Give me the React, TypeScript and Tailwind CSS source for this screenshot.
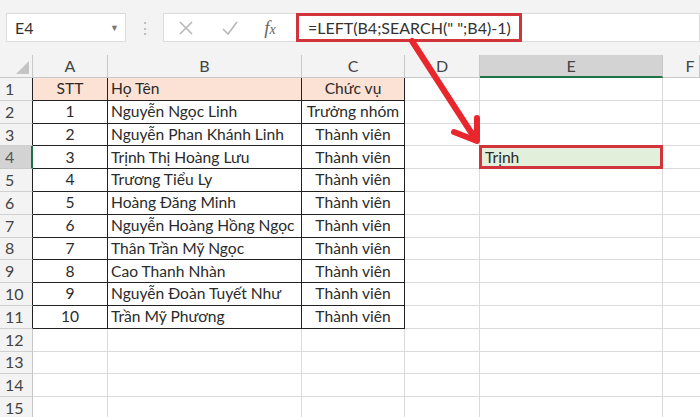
import React from "react";

const rows: [string, string, string][] = [
  ["STT", "Họ Tên", "Chức vụ"],
  ["1", "Nguyễn Ngọc Linh", "Trưởng nhóm"],
  ["2", "Nguyễn Phan Khánh Linh", "Thành viên"],
  ["3", "Trịnh Thị Hoàng Lưu", "Thành viên"],
  ["4", "Trương Tiểu Ly", "Thành viên"],
  ["5", "Hoàng Đăng Minh", "Thành viên"],
  ["6", "Nguyễn Hoàng Hồng Ngọc", "Thành viên"],
  ["7", "Thân Trần Mỹ Ngọc", "Thành viên"],
  ["8", "Cao Thanh Nhàn", "Thành viên"],
  ["9", "Nguyễn Đoàn Tuyết Như", "Thành viên"],
  ["10", "Trần Mỹ Phương", "Thành viên"],
];

const font = { fontFamily: "Lato, 'Noto Sans', sans-serif" };

export default function App() {
  const totalRows = 15;
  return (
    <div className="relative w-[700px] h-[417px] overflow-hidden bg-white text-[#2b2b2b]" style={font}>
      {/* toolbar */}
      <div className="h-[55px] bg-[#f3f3f3] pt-[13px] flex items-start">
        <div className="ml-[6px] w-[120px] h-[29px] bg-white border border-[#dcdcdc] flex items-center pl-[8px] pr-[6px] text-[16px] text-[#333]">
          <span className="flex-1">E4</span>
          <span className="text-[9px] text-[#777]">▼</span>
        </div>
        <div className="w-[37px] h-[29px] flex items-center justify-center text-[#b5b5b5] text-[16px]">⋮</div>
        <div className="flex-1 h-[29px] bg-white border border-[#dcdcdc] flex items-center">
          <div className="w-[44px] flex justify-center">
            <svg width="16" height="16" viewBox="0 0 16 16"><path d="M2 2 L14 14 M14 2 L2 14" stroke="#b8b8b8" strokeWidth="1.6" /></svg>
          </div>
          <div className="w-[44px] flex justify-center">
            <svg width="18" height="16" viewBox="0 0 18 16"><path d="M2 9 L7 14 L16 2" stroke="#b8b8b8" strokeWidth="1.6" fill="none" /></svg>
          </div>
          <div className="w-[36px] flex justify-center items-baseline italic text-[#666]" style={{ fontFamily: "'Liberation Serif', serif" }}>
            <span className="text-[19px] leading-none">f</span>
            <span className="text-[14px] leading-none">x</span>
          </div>
          <div className="ml-[8px] h-[29px] w-[226px] border-[3px] border-[#d2343b] flex items-center pl-[9px] text-[16px] text-[#333] whitespace-nowrap">
            =LEFT(B4;SEARCH(" ";B4)-1)
          </div>
        </div>
      </div>

      {/* grid */}
      <div className="grid grid-cols-[33px_75px_194px_103px_75px_183px_1fr]">
        {/* header row */}
        <div className="h-[23px] bg-[#f3f3f3] border-r border-b border-[#c8c8c8] relative">
          <svg className="absolute right-[3px] bottom-[3px]" width="13" height="13" viewBox="0 0 13 13"><polygon points="13,0 13,13 0,13" fill="#c4c4c4" /></svg>
        </div>
        {["A", "B", "C", "D", "E", "F"].map((c) => (
          <div
            key={c}
            className={
              c === "E"
                ? "h-[23px] bg-[#d3d3d3] border-r border-b-2 border-r-[#c8c8c8] border-b-[#217346] flex items-center justify-center text-[16px] text-[#444]"
                : "h-[23px] bg-[#f3f3f3] border-r border-b border-[#c8c8c8] flex items-center justify-center text-[16px] text-[#444]"
            }
          >
            {c === "F" ? <span className="ml-[18px]">F</span> : c}
          </div>
        ))}

        {Array.from({ length: totalRows }).map((_, i) => {
          const r = rows[i];
          const inTable = i < 11;
          const isHead = i === 0;
          const rh = "h-[22.8px]";
          const tb = "border-r border-b border-[#222]";
          const gl = "border-r border-b border-[#dadada]";
          const txt = "text-[15.6px]";
          return (
            <React.Fragment key={i}>
              <div
                className={
                  i === 3
                    ? `${rh} bg-[#d3d3d3] border-b border-b-[#c8c8c8] border-r-2 border-r-[#217346] flex items-center pl-[5px] text-[16px] text-[#555]`
                    : `${rh} bg-[#f3f3f3] border-b border-b-[#d0d0d0] border-r ${inTable ? "border-r-[#222]" : "border-r-[#c8c8c8]"} flex items-center pl-[5px] text-[16px] text-[#444]`
                }
              >
                {i + 1}
              </div>
              <div className={`${rh} ${inTable ? tb : gl} ${isHead ? "bg-[#fbe2d5]" : ""} flex items-center justify-center ${txt} text-[#2b2b2b]`}>
                {r ? r[0] : ""}
              </div>
              <div className={`${rh} ${inTable ? tb : gl} ${isHead ? "bg-[#fbe2d5]" : ""} flex items-center pl-[3px] ${txt} text-[#2b2b2b] whitespace-nowrap`}>
                {r ? r[1] : ""}
              </div>
              <div className={`${rh} ${inTable ? tb : gl} ${isHead ? "bg-[#fbe2d5]" : ""} flex items-center justify-center ${txt} text-[#2b2b2b] whitespace-nowrap`}>
                {r ? r[2] : ""}
              </div>
              <div className={`${rh} ${gl}`} />
              <div className={`${rh} ${gl} relative ${i === 3 ? "bg-[#e2efda]" : ""} flex items-center pl-[5px] ${txt} text-[#2b2b2b]`}>
                {i === 3 && (
                  <>
                    <div className="absolute -left-px -top-px -right-px -bottom-px border-[3px] border-[#d2343b]" />
                    <span className="relative">Trịnh</span>
                  </>
                )}
              </div>
              <div className={`${rh} border-b border-[#dadada]`} />
            </React.Fragment>
          );
        })}
      </div>

      {/* arrow overlay */}
      <svg className="absolute left-0 top-0 pointer-events-none" width="700" height="417" viewBox="0 0 700 417">
        <g stroke="#e8262c" strokeWidth="6" strokeLinecap="round" strokeLinejoin="round" fill="none">
          <path d="M412 41 L476 140" />
          <path d="M454 132 L477 141 L477 118" />
        </g>
      </svg>
    </div>
  );
}
